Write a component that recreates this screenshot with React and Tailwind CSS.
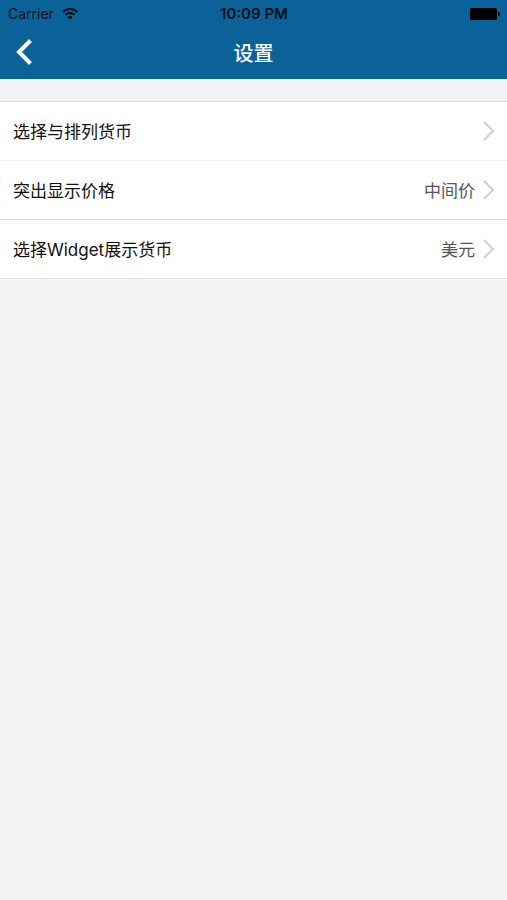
import React from 'react';

const rows = [
  { id: 'currencies', label: '选择与排列货币', value: '', border: 'border-[#f0f0f1]' },
  { id: 'price', label: '突出显示价格', value: '中间价', border: 'border-[#dcdddd]' },
  { id: 'widget', label: '选择Widget展示货币', value: '美元', border: 'border-[#e4e5e6]' },
];

const WifiIcon = () => (
  <svg width="16" height="12" viewBox="0 0 16 12" fill="none" stroke="#04101a" strokeWidth="2" aria-hidden="true">
    <path d="M.8 4C5 0 11 0 15.200 4" />
    <path d="M3.300 6.800C6 4.300 10 4.300 12.700 6.800" />
    <path d="M8 11.500L5.300 8.900C6.900 7.500 9.100 7.500 10.700 8.900Z" fill="#04101a" stroke="none" />
  </svg>
);

const BatteryIcon = () => (
  <svg width="30" height="12" viewBox="0 0 30 12" fill="#000" aria-hidden="true">
    <rect width="27" height="12" rx="1.5" />
    <path d="M28 4c1.300.3 2 1 2 2s-.7 1.700-2 2z" />
  </svg>
);

const StatusBar = () => (
  <div className="grid grid-cols-3 items-center h-7 pl-2 pr-[7px] text-sm text-[#04101a]">
    <div className="flex items-center gap-2">
      <span>Carrier</span>
      <WifiIcon />
    </div>
    <span className="text-center text-[15px] font-semibold whitespace-nowrap">10:09 PM</span>
    <div className="flex justify-end">
      <BatteryIcon />
    </div>
  </div>
);

const NavBar = () => (
  <div className="grid grid-cols-3 items-center h-[51px] px-4 pb-1">
    <button type="button" aria-label="返回" className="justify-self-start">
      <svg width="16" height="26" viewBox="0 0 16 26" fill="none" stroke="#fff" strokeWidth="4" aria-hidden="true">
        <path d="M14.500 1.500L3 13l11.500 11.500" />
      </svg>
    </button>
    <h1 className="pt-1 text-center text-xl font-medium text-white">设置</h1>
  </div>
);

const SettingRow = ({ label, value, border }) => (
  <li className={`border-b bg-white ${border}`}>
    <button type="button" className="flex items-center w-full h-[58px] pl-[13px] pr-3 text-[17px] text-left">
      <span className="flex-1 pt-1 text-[#111]">{label}</span>
      <span className="pt-1 text-[#555]">{value}</span>
      <svg className="ml-2" width="12" height="20" viewBox="0 0 12 20" fill="none" stroke="#cfcfd2" strokeWidth="2" aria-hidden="true">
        <path d="M1 1l9 9-9 9" />
      </svg>
    </button>
  </li>
);

const App = () => {
  return (
    <div className="min-h-screen bg-[#f1f3f5] font-[Inter,'Noto_Sans_CJK_SC',sans-serif]">
      <header className="bg-[#0b6299]">
        <StatusBar />
        <NavBar />
      </header>
      <main className="pt-[22px]">
        <ul className="border-t border-[#dcdddd]">
          {rows.map((row) => (
            <SettingRow key={row.id} label={row.label} value={row.value} border={row.border} />
          ))}
        </ul>
      </main>
    </div>
  );
};

export default App;
